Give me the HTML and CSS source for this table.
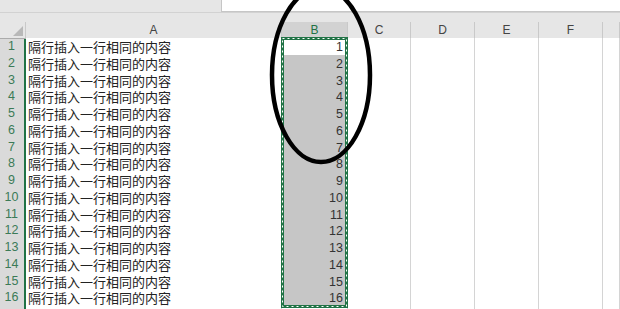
FILE: index.html
```html
<!DOCTYPE html>
<html lang="zh-CN">
<head>
<meta charset="utf-8">
<title>Sheet</title>
<link rel="stylesheet" href="styles.css">
</head>
<body>
<div class="app">
  <div class="topbar"><div class="namegap"></div><div class="formula"></div></div>
  <div class="gap"></div>
  <div class="row head">
    <div class="corner"></div>
    <div class="ch">A</div>
    <div class="ch sel">B</div>
    <div class="ch">C</div>
    <div class="ch">D</div>
    <div class="ch">E</div>
    <div class="ch">F</div>
    <div class="ch"></div>
  </div>
  <div class="rows">
    <div class="row"><div class="rh">1</div><div class="c a">隔行插入一行相同的内容</div><div class="c b active">1</div><div class="c"></div><div class="c"></div><div class="c"></div><div class="c"></div><div class="c"></div></div>
    <div class="row"><div class="rh">2</div><div class="c a">隔行插入一行相同的内容</div><div class="c b">2</div><div class="c"></div><div class="c"></div><div class="c"></div><div class="c"></div><div class="c"></div></div>
    <div class="row"><div class="rh">3</div><div class="c a">隔行插入一行相同的内容</div><div class="c b">3</div><div class="c"></div><div class="c"></div><div class="c"></div><div class="c"></div><div class="c"></div></div>
    <div class="row"><div class="rh">4</div><div class="c a">隔行插入一行相同的内容</div><div class="c b">4</div><div class="c"></div><div class="c"></div><div class="c"></div><div class="c"></div><div class="c"></div></div>
    <div class="row"><div class="rh">5</div><div class="c a">隔行插入一行相同的内容</div><div class="c b">5</div><div class="c"></div><div class="c"></div><div class="c"></div><div class="c"></div><div class="c"></div></div>
    <div class="row"><div class="rh">6</div><div class="c a">隔行插入一行相同的内容</div><div class="c b">6</div><div class="c"></div><div class="c"></div><div class="c"></div><div class="c"></div><div class="c"></div></div>
    <div class="row"><div class="rh">7</div><div class="c a">隔行插入一行相同的内容</div><div class="c b">7</div><div class="c"></div><div class="c"></div><div class="c"></div><div class="c"></div><div class="c"></div></div>
    <div class="row"><div class="rh">8</div><div class="c a">隔行插入一行相同的内容</div><div class="c b">8</div><div class="c"></div><div class="c"></div><div class="c"></div><div class="c"></div><div class="c"></div></div>
    <div class="row"><div class="rh">9</div><div class="c a">隔行插入一行相同的内容</div><div class="c b">9</div><div class="c"></div><div class="c"></div><div class="c"></div><div class="c"></div><div class="c"></div></div>
    <div class="row"><div class="rh">10</div><div class="c a">隔行插入一行相同的内容</div><div class="c b">10</div><div class="c"></div><div class="c"></div><div class="c"></div><div class="c"></div><div class="c"></div></div>
    <div class="row"><div class="rh">11</div><div class="c a">隔行插入一行相同的内容</div><div class="c b">11</div><div class="c"></div><div class="c"></div><div class="c"></div><div class="c"></div><div class="c"></div></div>
    <div class="row"><div class="rh">12</div><div class="c a">隔行插入一行相同的内容</div><div class="c b">12</div><div class="c"></div><div class="c"></div><div class="c"></div><div class="c"></div><div class="c"></div></div>
    <div class="row"><div class="rh">13</div><div class="c a">隔行插入一行相同的内容</div><div class="c b">13</div><div class="c"></div><div class="c"></div><div class="c"></div><div class="c"></div><div class="c"></div></div>
    <div class="row"><div class="rh">14</div><div class="c a">隔行插入一行相同的内容</div><div class="c b">14</div><div class="c"></div><div class="c"></div><div class="c"></div><div class="c"></div><div class="c"></div></div>
    <div class="row"><div class="rh">15</div><div class="c a">隔行插入一行相同的内容</div><div class="c b">15</div><div class="c"></div><div class="c"></div><div class="c"></div><div class="c"></div><div class="c"></div></div>
    <div class="row"><div class="rh">16</div><div class="c a">隔行插入一行相同的内容</div><div class="c b">16</div><div class="c"></div><div class="c"></div><div class="c"></div><div class="c"></div><div class="c"></div></div>
    <div class="row"><div class="rh"></div><div class="c a"></div><div class="c"></div><div class="c"></div><div class="c"></div><div class="c"></div><div class="c"></div><div class="c"></div></div>
  </div>
  <svg class="selection" width="70" height="272" viewBox="0 0 70 272">
    <rect x="2.5" y="1.5" width="64" height="268" fill="none" stroke="#217346" stroke-width="3"/>
    <rect x="2.5" y="1.5" width="64" height="268" fill="none" stroke="#ffffff" stroke-width="1" stroke-dasharray="2 3"/>
  </svg>
  <svg class="circle" width="620" height="309" viewBox="0 0 620 309">
    <ellipse cx="321" cy="75" rx="49" ry="87" fill="none" stroke="#000" stroke-width="4.5"/>
  </svg>
</div>
</body>
</html>
```
FILE: styles.css
```css
html, body {
  margin: 0;
  padding: 0;
}
body {
  width: 620px;
  height: 309px;
  overflow: hidden;
  background: #ffffff;
  font-family: "Liberation Sans", Arial, sans-serif;
}
.app {
  position: relative;
  width: 620px;
  height: 309px;
  overflow: hidden;
}
.topbar {
  display: flex;
  height: 12px;
  background: #e6e6e6;
  border-bottom: 1px solid #d2d2d2;
}
.namegap {
  width: 221px;
}
.formula {
  flex: 1;
  background: #ffffff;
  border-left: 1px solid #c6c6c6;
  border-bottom: 1px solid #c6c6c6;
}
.gap {
  height: 9px;
  background: #e6e6e6;
}
.row {
  display: grid;
  grid-template-columns: 26px 256px 66px 63px 64px 64px 64px 1fr;
  height: 16.75px;
}
.row.head {
  height: 16px;
  background: #e6e6e6;
}
.corner {
  position: relative;
  border-bottom: 1px solid #ababab;
  border-right: 1px solid #c9c9c9;
}
.corner::after {
  content: "";
  position: absolute;
  right: 2px;
  bottom: 2px;
  width: 10px;
  height: 10px;
  background: #b8b8b8;
  clip-path: polygon(100% 0, 100% 100%, 0 100%);
}
.ch {
  box-sizing: border-box;
  border-right: 1px solid #c9c9c9;
  border-bottom: 1px solid #ababab;
  color: #444444;
  font-size: 12px;
  line-height: 15px;
  text-align: center;
  padding-top: 1px;
}
.ch.sel {
  background: #d2d2d2;
  color: #217346;
  border-bottom: 1px solid #217346;
}
.rows .row > div {
  box-sizing: border-box;
}
.rh {
  background: #dadada;
  border-right: 2px solid #217346;
  border-bottom: 1px solid #ececec;
  color: #3b7a57;
  font-size: 12.5px;
  line-height: 17px;
  text-align: center;
  padding-right: 1px;
}
.c {
  background: #ffffff;
  border-right: 1px solid #d4d4d4;
  border-bottom: 1px solid #d4d4d4;
  white-space: nowrap;
}
.c.a {
  font-family: "Noto Sans CJK SC", "Noto Sans", sans-serif;
  font-size: 13px;
  line-height: 16px;
  padding-top: 1px;
  color: #222222;
  padding-left: 2px;
}
.c.b {
  background: #c6c6c6;
  border-bottom-color: #b4b4b4;
  font-size: 12.5px;
  line-height: 18px;
  color: #333333;
  text-align: right;
  padding-right: 4px;
}
.c.b.active {
  background: #ffffff;
}
.selection {
  position: absolute;
  left: 280px;
  top: 37px;
}
.circle {
  position: absolute;
  left: 0;
  top: 0;
  pointer-events: none;
}
```
